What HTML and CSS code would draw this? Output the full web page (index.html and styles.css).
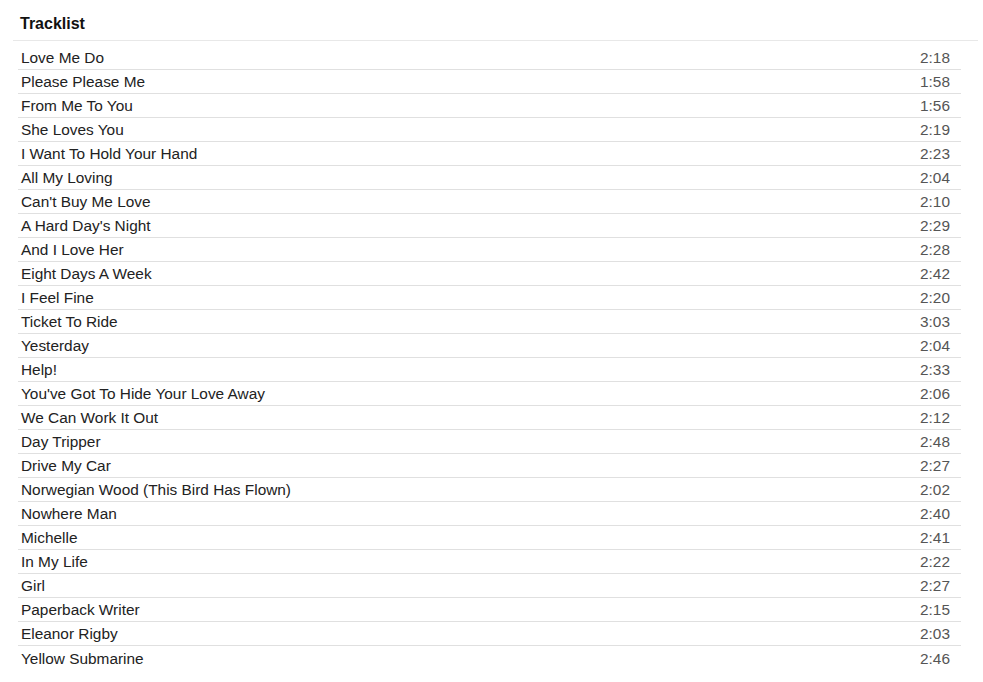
FILE: index.html
```html
<!DOCTYPE html>
<html lang="en">
  <head>
    <meta charset="UTF-8" />
    <title>Tracklist</title>
    <link rel="stylesheet" href="styles.css">
  </head>
  <body>
    <div class="panel">
      <div class="panel-header">Tracklist</div>
      <ul class="tracks">
        <li class="track"><span class="title">Love Me Do</span><span class="time">2:18</span></li>
        <li class="track"><span class="title">Please Please Me</span><span class="time">1:58</span></li>
        <li class="track"><span class="title">From Me To You</span><span class="time">1:56</span></li>
        <li class="track"><span class="title">She Loves You</span><span class="time">2:19</span></li>
        <li class="track"><span class="title">I Want To Hold Your Hand</span><span class="time">2:23</span></li>
        <li class="track"><span class="title">All My Loving</span><span class="time">2:04</span></li>
        <li class="track"><span class="title">Can't Buy Me Love</span><span class="time">2:10</span></li>
        <li class="track"><span class="title">A Hard Day's Night</span><span class="time">2:29</span></li>
        <li class="track"><span class="title">And I Love Her</span><span class="time">2:28</span></li>
        <li class="track"><span class="title">Eight Days A Week</span><span class="time">2:42</span></li>
        <li class="track"><span class="title">I Feel Fine</span><span class="time">2:20</span></li>
        <li class="track"><span class="title">Ticket To Ride</span><span class="time">3:03</span></li>
        <li class="track"><span class="title">Yesterday</span><span class="time">2:04</span></li>
        <li class="track"><span class="title">Help!</span><span class="time">2:33</span></li>
        <li class="track"><span class="title">You've Got To Hide Your Love Away</span><span class="time">2:06</span></li>
        <li class="track"><span class="title">We Can Work It Out</span><span class="time">2:12</span></li>
        <li class="track"><span class="title">Day Tripper</span><span class="time">2:48</span></li>
        <li class="track"><span class="title">Drive My Car</span><span class="time">2:27</span></li>
        <li class="track"><span class="title">Norwegian Wood (This Bird Has Flown)</span><span class="time">2:02</span></li>
        <li class="track"><span class="title">Nowhere Man</span><span class="time">2:40</span></li>
        <li class="track"><span class="title">Michelle</span><span class="time">2:41</span></li>
        <li class="track"><span class="title">In My Life</span><span class="time">2:22</span></li>
        <li class="track"><span class="title">Girl</span><span class="time">2:27</span></li>
        <li class="track"><span class="title">Paperback Writer</span><span class="time">2:15</span></li>
        <li class="track"><span class="title">Eleanor Rigby</span><span class="time">2:03</span></li>
        <li class="track"><span class="title">Yellow Submarine</span><span class="time">2:46</span></li>
      </ul>
    </div>
  </body>
</html>
```

FILE: styles.css
```css
* {
  box-sizing: border-box;
  margin: 0;
  padding: 0;
}

body {
  font-family: "Liberation Sans", Arial, sans-serif;
  background-color: #ffffff;
  color: #222222;
}

.panel {
  margin: 0 5px 0 13px;
}

.panel-header {
  padding: 15px 7px 7px;
  font-size: 16px;
  line-height: 18px;
  font-weight: bold;
  color: #111111;
  border-bottom: 1px solid #e8e8e8;
}

.tracks {
  list-style: none;
  margin: 0 17px 0 5px;
  padding-top: 5px;
}

.track {
  display: flex;
  justify-content: space-between;
  align-items: center;
  height: 24px;
  padding: 1px 11px 0 3px;
  font-size: 15.4px;
  border-bottom: 1px solid #e0e0e0;
}

.track:last-child {
  border-bottom: none;
}

.title {
  color: #222222;
}

.time {
  color: #555555;
}
```
